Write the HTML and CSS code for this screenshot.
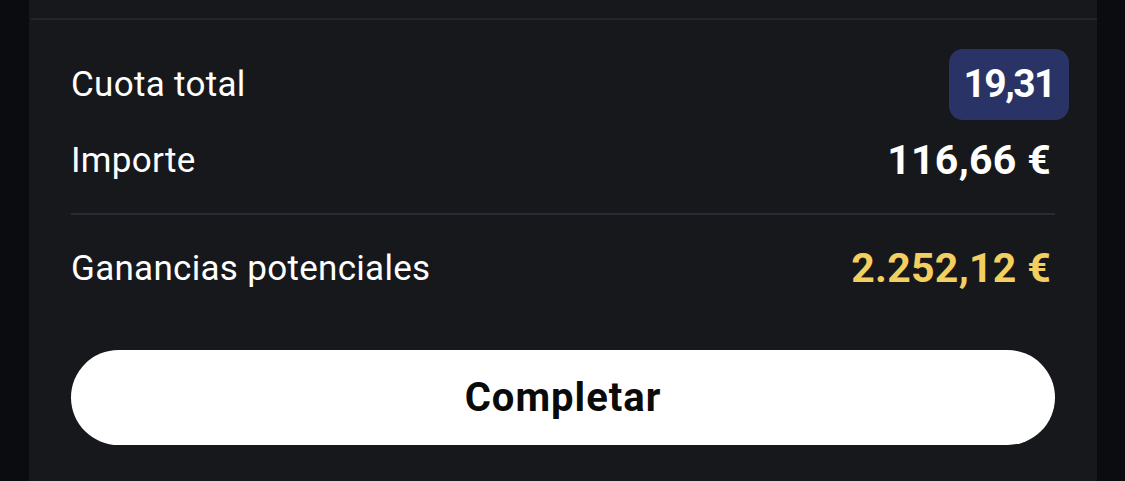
FILE: index.html
```html
<!DOCTYPE html>
<html lang="es">
<head>
  <meta charset="UTF-8" />
  <meta name="viewport" content="width=device-width, initial-scale=1.0"/>
  <title>Boleto</title>
  <link rel="stylesheet" href="styles.css">
</head>
<body>

  <div class="panel">
    <div class="top-line"></div>

    <div class="summary">
      <div class="row row-odds">
        <span class="label">Cuota total</span>
        <span class="odds">19,31</span>
      </div>

      <div class="row row-stake">
        <span class="label">Importe</span>
        <span class="amount">116,66 €</span>
      </div>

      <div class="divider"></div>

      <div class="row row-win">
        <span class="label">Ganancias potenciales</span>
        <span class="amount win">2.252,12 €</span>
      </div>

      <button class="complete">Completar</button>
    </div>
  </div>

</body>
</html>
```

FILE: styles.css
```css
body {
  margin: 0;
  background: #0b0c0f;
  font-family: Roboto, "Noto Sans", sans-serif;
  color: #fff;
}
.panel {
  margin: 0 28px 0 29px;
  height: 481px;
  background: #17181c;
  padding-top: 18px;
  box-sizing: border-box;
}
.top-line {
  height: 2px;
  margin-left: 2px;
  background: #25262c;
}
.summary {
  padding: 0 42px;
  display: flex;
  flex-direction: column;
}
.row {
  display: flex;
  justify-content: space-between;
  align-items: center;
}
.row-odds {
  margin-top: 29px;
  height: 71px;
}
.row-stake {
  margin-top: 15px;
  height: 50px;
}
.row-win {
  margin-top: 28px;
  height: 50px;
}
.label {
  font-size: 35px;
  font-weight: 400;
  letter-spacing: 0.3px;
}
.odds {
  background: #2a3365;
  border-radius: 14px;
  padding: 0 14px;
  height: 71px;
  line-height: 71px;
  font-size: 39px;
  font-weight: 700;
  letter-spacing: -1.5px;
  margin-right: -14px;
}
.amount {
  font-size: 41px;
  font-weight: 700;
  letter-spacing: 0.3px;
  margin-right: 4px;
}
.win {
  color: #f3cf5f;
}
.divider {
  height: 2px;
  margin-top: 28px;
  background: #2a2a36;
}
.complete {
  margin-top: 57px;
  height: 95px;
  border: none;
  border-radius: 48px;
  background: #fff;
  color: #0a0a0a;
  font-family: inherit;
  font-size: 40px;
  font-weight: 700;
  letter-spacing: 1px;
}
```
